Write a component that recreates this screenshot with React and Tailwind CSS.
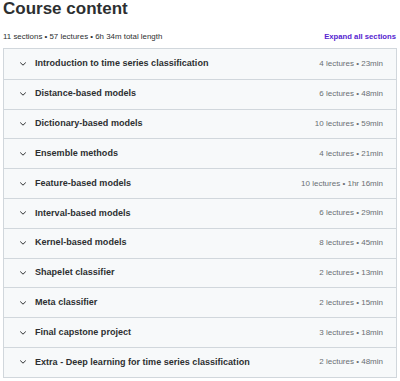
const sections = [
  ["Introduction to time series classification", "4 lectures • 23min"],
  ["Distance-based models", "6 lectures • 48min"],
  ["Dictionary-based models", "10 lectures • 59min"],
  ["Ensemble methods", "4 lectures • 21min"],
  ["Feature-based models", "10 lectures • 1hr 16min"],
  ["Interval-based models", "6 lectures • 29min"],
  ["Kernel-based models", "8 lectures • 45min"],
  ["Shapelet classifier", "2 lectures • 13min"],
  ["Meta classifier", "2 lectures • 15min"],
  ["Final capstone project", "3 lectures • 18min"],
  ["Extra - Deep learning for time series classification", "2 lectures • 48min"],
];

function Chevron() {
  return (
    <svg width="8" height="6" viewBox="0 0 8 6" className="shrink-0">
      <path d="M1.5 1.8 L4 4.2 L6.5 1.8" fill="none" stroke="#2d2f31" strokeWidth="1" strokeLinecap="round" strokeLinejoin="round" />
    </svg>
  );
}

export default function App() {
  return (
    <div className="w-[400px] h-[381px] bg-white text-[#2d2f31] px-[3px]" style={{ fontFamily: '"Liberation Sans", Arial, sans-serif' }}>
      <h2 className="text-[17px] leading-[18px] font-bold">Course content</h2>
      <div className="mt-[13px] mb-[5px] flex items-center justify-between h-[12px]">
        <span className="text-[7.9px] text-[#2d2f31]">11 sections • 57 lectures • 6h 34m total length</span>
        <span className="text-[7.7px] font-bold text-[#5624d0] pr-[1px]">Expand all sections</span>
      </div>
      <div className="border border-[#d1d7dc] bg-[#f7f9fa]">
        {sections.map(([title, meta], i) => (
          <div key={i} className={"flex items-center h-[29.8px] pl-[14.5px] pr-[13px] " + (i > 0 ? "border-t border-[#d1d7dc]" : "")}>
            <Chevron />
            <span className="ml-[8.5px] text-[9.05px] font-bold flex-1 truncate">{title}</span>
            <span className="text-[8px] text-[#6a6f73]">{meta}</span>
          </div>
        ))}
      </div>
    </div>
  );
}
